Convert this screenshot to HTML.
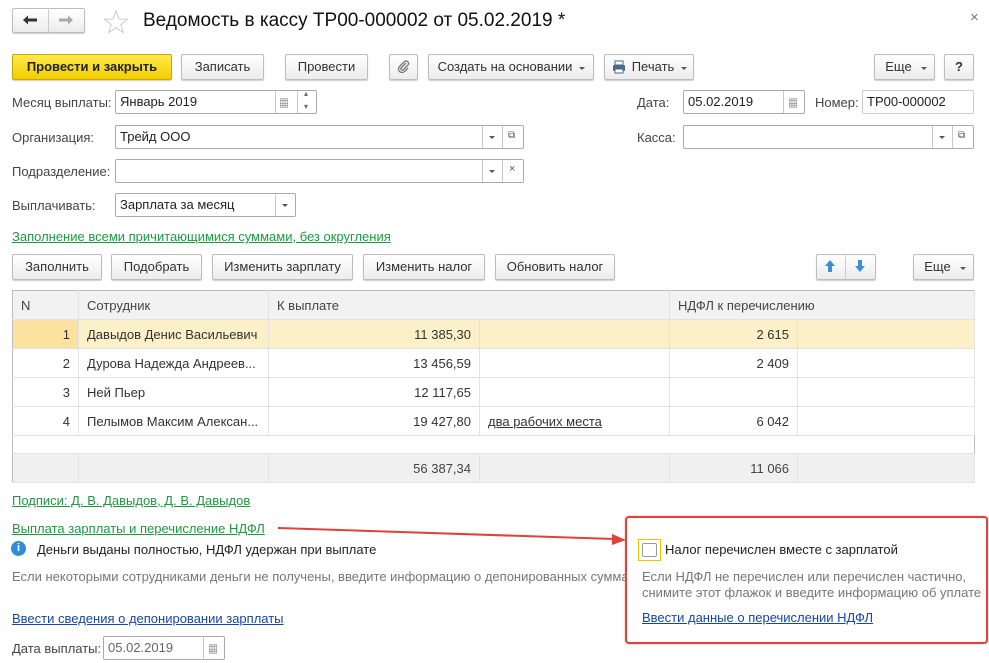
<!DOCTYPE html>
<html><head><meta charset="utf-8"><style>
*{box-sizing:border-box;margin:0;padding:0}
body{width:989px;height:663px;background:#fff;font-family:"Liberation Sans","Noto Sans CJK SC",sans-serif;font-size:13px;color:#333;position:relative;overflow:hidden}
.a{position:absolute;white-space:nowrap}
.btn{position:absolute;border:1px solid #bdbdbd;border-radius:2px;background:linear-gradient(#fff,#ececec);box-shadow:0 1px 1px rgba(0,0,0,.2);text-align:center;color:#333;font-size:13px}
.inp{position:absolute;border:1px solid #aaa;border-radius:2px;background:#fff;padding-left:4px;color:#222}
.sep{position:absolute;top:0;bottom:0;border-left:1px solid #c8c8c8}
.dd{position:absolute;width:0;height:0;border-left:3px solid transparent;border-right:3px solid transparent;border-top:3px solid #555}
.lbl{position:absolute;color:#444}
.lg{position:absolute;color:#1a9c3e;text-decoration:underline;white-space:nowrap}
.lb{position:absolute;color:#1546a8;text-decoration:underline;white-space:nowrap}
td{border-right:1px solid #e2e2e2;border-bottom:1px solid #e2e2e2;height:29px;padding:0 8px;white-space:nowrap}
table{border-collapse:collapse;position:absolute;left:12px;top:290px;width:962px;border:1px solid #bbb;table-layout:fixed}
.r{text-align:right}
tr.e td{height:18px;border-right:none;line-height:1px;font-size:1px}
tr.e td:last-child{border-right:1px solid #bbb}
</style></head><body>
<div class="btn" style="left:12px;top:8px;width:73px;height:25px"></div>
<div class="a" style="left:48px;top:8px;height:25px;border-left:1px solid #ccc"></div>
<svg class="a" style="left:22px;top:14px" width="16" height="12"><path d="M1 6 L6 1.5 V4.5 H15 V7.5 H6 V10.5 Z" fill="#333"/></svg>
<svg class="a" style="left:58px;top:14px" width="16" height="12"><path d="M15 6 L10 1.5 V4.5 H1 V7.5 H10 V10.5 Z" fill="#aaa"/></svg>
<svg class="a" style="left:103px;top:9px" width="26" height="25"><path d="M13 2 L16 10 L24.5 10.3 L17.8 15.5 L20.2 23.5 L13 18.8 L5.8 23.5 L8.2 15.5 L1.5 10.3 L10 10 Z" fill="none" stroke="#c8c8c8" stroke-width="1"/></svg>
<div class="a" style="left:143px;top:10px;font-size:19px;color:#111">Ведомость в кассу ТР00-000002 от 05.02.2019 *</div>
<div class="a" style="left:970px;top:9px;font-size:15px;color:#777">×</div>

<div class="btn" style="left:12px;top:54px;width:160px;height:26px;line-height:24px;background:linear-gradient(#ffe94a,#f2cf00);border-color:#c9a800;font-weight:bold;color:#222">Провести и закрыть</div>
<div class="btn" style="left:181px;top:54px;width:83px;height:26px;line-height:24px">Записать</div>
<div class="btn" style="left:285px;top:54px;width:83px;height:26px;line-height:24px">Провести</div>
<div class="btn" style="left:389px;top:54px;width:29px;height:26px;line-height:24px;color:#777">
<svg width="14" height="14" viewBox="0 0 14 14" style="margin-top:5px"><path d="M9 3 L4 8 a1.5 1.5 0 0 0 2 2 L11 5 a2.5 2.5 0 0 0 -3.5 -3.5 L2.5 6.5 a3.5 3.5 0 0 0 5 5 L11 8" fill="none" stroke="#777" stroke-width="1.3"/></svg></div>
<div class="btn" style="left:428px;top:54px;width:166px;height:26px;line-height:24px;padding-right:12px">Создать на основании</div><div class="dd" style="left:579px;top:67px"></div>
<div class="btn" style="left:604px;top:54px;width:90px;height:26px;line-height:24px;padding-left:18px;padding-right:10px">Печать</div><div class="dd" style="left:681px;top:67px"></div>
<svg class="a" style="left:612px;top:60px" width="14" height="14"><rect x="3" y="1" width="8" height="4" fill="#fff" stroke="#4a6a8a"/><rect x="1" y="5" width="12" height="6" rx="1" fill="#4a6a8a"/><rect x="3" y="9" width="8" height="4" fill="#fff" stroke="#4a6a8a"/></svg>
<div class="btn" style="left:874px;top:54px;width:61px;height:26px;line-height:24px;padding-right:12px">Еще</div><div class="dd" style="left:921px;top:67px"></div>
<div class="btn" style="left:944px;top:54px;width:30px;height:26px;line-height:24px;font-weight:bold">?</div>

<div class="lbl" style="left:12px;top:95px">Месяц выплаты:</div>
<div class="inp" style="left:115px;top:90px;width:202px;height:24px;line-height:22px">Январь 2019<div class="sep" style="left:159px"></div><div class="sep" style="left:181px"></div></div>
<div class="a" style="left:279px;top:95px;font-size:10px;color:#555">▦</div>
<div class="a" style="left:304px;top:89px;font-size:8px;color:#666">▴</div><div class="a" style="left:304px;top:102px;font-size:8px;color:#666">▾</div>
<div class="lbl" style="left:637px;top:95px">Дата:</div>
<div class="inp" style="left:683px;top:90px;width:122px;height:24px;line-height:22px">05.02.2019<div class="sep" style="left:99px"></div></div>
<div class="a" style="left:788px;top:95px;font-size:10px;color:#555">▦</div>
<div class="lbl" style="left:815px;top:95px">Номер:</div>
<div class="inp" style="left:862px;top:90px;width:112px;height:24px;line-height:22px;border-color:#ccc">ТР00-000002</div>

<div class="lbl" style="left:12px;top:130px">Организация:</div>
<div class="inp" style="left:115px;top:125px;width:409px;height:24px;line-height:22px">Трейд ООО<div class="sep" style="left:366px"></div><div class="sep" style="left:386px"></div></div>
<div class="dd" style="left:489px;top:136px"></div><div class="a" style="left:508px;top:130px;font-size:10px;color:#555">⧉</div>
<div class="lbl" style="left:637px;top:130px">Касса:</div>
<div class="inp" style="left:683px;top:125px;width:291px;height:24px"><div class="sep" style="left:248px"></div><div class="sep" style="left:268px"></div></div>
<div class="dd" style="left:939px;top:136px"></div><div class="a" style="left:958px;top:130px;font-size:10px;color:#555">⧉</div>

<div class="lbl" style="left:12px;top:164px">Подразделение:</div>
<div class="inp" style="left:115px;top:159px;width:409px;height:24px"><div class="sep" style="left:366px"></div><div class="sep" style="left:386px"></div></div>
<div class="dd" style="left:489px;top:170px"></div><div class="a" style="left:509px;top:163px;font-size:11px;color:#555">×</div>

<div class="lbl" style="left:12px;top:198px">Выплачивать:</div>
<div class="inp" style="left:115px;top:193px;width:181px;height:24px;line-height:22px">Зарплата за месяц<div class="sep" style="left:159px"></div></div>
<div class="dd" style="left:282px;top:204px"></div>

<div class="lg" style="left:12px;top:229px">Заполнение всеми причитающимися суммами, без округления</div>

<div class="btn" style="left:12px;top:254px;width:90px;height:26px;line-height:24px">Заполнить</div>
<div class="btn" style="left:111px;top:254px;width:91px;height:26px;line-height:24px">Подобрать</div>
<div class="btn" style="left:212px;top:254px;width:141px;height:26px;line-height:24px">Изменить зарплату</div>
<div class="btn" style="left:363px;top:254px;width:122px;height:26px;line-height:24px">Изменить налог</div>
<div class="btn" style="left:495px;top:254px;width:120px;height:26px;line-height:24px">Обновить налог</div>
<div class="btn" style="left:816px;top:254px;width:60px;height:26px"></div>
<div class="a" style="left:845px;top:254px;height:26px;border-left:1px solid #ccc"></div>
<svg class="a" style="left:823px;top:259px" width="14" height="14"><path d="M7 1 L12 7 H9 V13 H5 V7 H2 Z" fill="#3d8fd6"/></svg>
<svg class="a" style="left:853px;top:259px" width="14" height="14"><path d="M7 13 L12 7 H9 V1 H5 V7 H2 Z" fill="#3d8fd6"/></svg>
<div class="btn" style="left:913px;top:254px;width:61px;height:26px;line-height:24px;padding-right:12px">Еще</div><div class="dd" style="left:960px;top:267px"></div>

<table>
<colgroup><col style="width:66px"><col style="width:190px"><col style="width:211px"><col style="width:190px"><col style="width:128px"><col style="width:177px"></colgroup>
<tr style="background:#f2f2f2;color:#444"><td>N</td><td>Сотрудник</td><td colspan="2">К выплате</td><td colspan="2">НДФЛ к перечислению</td></tr>
<tr style="background:#fcf0c8"><td class="r" style="background:#fbe2a0">1</td><td>Давыдов Денис Васильевич</td><td class="r">11 385,30</td><td></td><td class="r">2 615</td><td></td></tr>
<tr><td class="r">2</td><td>Дурова Надежда Андреев...</td><td class="r">13 456,59</td><td></td><td class="r">2 409</td><td></td></tr>
<tr><td class="r">3</td><td>Ней Пьер</td><td class="r">12 117,65</td><td></td><td class="r"></td><td></td></tr>
<tr><td class="r">4</td><td>Пелымов Максим Алексан...</td><td class="r">19 427,80</td><td style="text-decoration:underline">два рабочих места</td><td class="r">6 042</td><td></td></tr>
<tr class="e"><td></td><td></td><td></td><td></td><td></td><td></td></tr>
<tr style="background:#f0f0f0;color:#444"><td></td><td></td><td class="r">56 387,34</td><td></td><td class="r">11 066</td><td></td></tr>
</table>

<div class="lg" style="left:12px;top:493px">Подписи: Д. В. Давыдов, Д. В. Давыдов</div>
<div class="lg" style="left:12px;top:521px">Выплата зарплаты и перечисление НДФЛ</div>
<svg class="a" style="left:0;top:0" width="989" height="663"><line x1="278" y1="528" x2="614" y2="539" stroke="#e0413a" stroke-width="2"/><path d="M626 540 L612 534 L612 545 Z" fill="#e0413a"/></svg>
<div class="a" style="left:11px;top:541px;width:15px;height:15px;border-radius:50%;background:#2f8fd6;color:#fff;font-size:11px;font-weight:bold;text-align:center;line-height:15px">i</div>
<div class="a" style="left:37px;top:542px;color:#222">Деньги выданы полностью, НДФЛ удержан при выплате</div>
<div class="a" style="left:12px;top:569px;color:#777">Если некоторыми сотрудниками деньги не получены, введите информацию о депонированных суммах</div>
<div class="lb" style="left:12px;top:611px">Ввести сведения о депонировании зарплаты</div>
<div class="lbl" style="left:12px;top:641px">Дата выплаты:</div>
<div class="inp" style="left:103px;top:636px;width:122px;height:24px;line-height:22px;color:#666">05.02.2019<div class="sep" style="left:99px"></div></div>
<div class="a" style="left:208px;top:641px;font-size:10px;color:#555">▦</div>

<div class="a" style="left:625px;top:516px;width:363px;height:128px;border:2px solid #e0413a;border-radius:4px;background:#fff;box-shadow:0 0 2px rgba(224,65,58,.4)"></div>
<div class="a" style="left:638px;top:539px;width:23px;height:22px;border:1px solid #f2c200;background:#fff"><div style="margin:3px;width:15px;height:14px;border:1px solid #999;border-radius:2px"></div></div>
<div class="a" style="left:665px;top:542px;color:#222">Налог перечислен вместе с зарплатой</div>
<div class="a" style="left:642px;top:569px;color:#777">Если НДФЛ не перечислен или перечислен частично,</div>
<div class="a" style="left:642px;top:585px;color:#777">снимите этот флажок и введите информацию об уплате</div>
<div class="lb" style="left:642px;top:610px">Ввести данные о перечислении НДФЛ</div>
</body></html>
